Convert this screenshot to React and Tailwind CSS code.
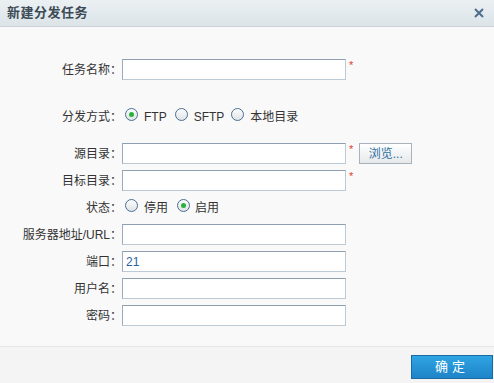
import React from 'react';

const font = { fontFamily: '"Liberation Sans", "Noto Sans CJK SC", sans-serif' };

function Radio({ checked }) {
    return (
        <span className="relative inline-block w-[13px] h-[13px] rounded-full border border-[#4a6f93] bg-gradient-to-b from-[#fdfdfd] to-[#dfe3e6] shrink-0">
            {checked && <span className="absolute left-[3px] top-[3px] w-[5px] h-[5px] rounded-full bg-[#2bb13a]" />}
        </span>
    );
}

function Field({ label, mt = 'mt-[6px]', children }) {
    return (
        <div className={`flex items-center h-[21px] ${mt}`}>
            <label className="w-[122px] text-right text-[12px] text-[#333] whitespace-nowrap">{label}</label>
            {children}
        </div>
    );
}

function TextInput({ value = '' }) {
    return (
        <input
            type="text"
            defaultValue={value}
            className="w-[224px] h-[21px] bg-white border border-t-[#8e9fb0] border-l-[#9aabbb] border-b-[#bccad6] border-r-[#bccad6] px-[3px] text-[12px] text-[#2b5fa0] outline-none"
            style={font}
        />
    );
}

function Req() {
    return <span className="ml-[3px] self-start mt-[1px] text-[11px] leading-none text-[#e43a3a]">*</span>;
}

export default function App() {
    return (
        <div className="w-[494px] h-[383px] flex flex-col bg-[#f9f9f9]" style={font}>
            {/* header */}
            <div className="h-[27px] flex items-center justify-between px-[7px] bg-gradient-to-b from-[#ebf0f3] to-[#dce4e8] border-b border-[#c9d3d8]">
                <span className="text-[13px] font-bold text-[#3c4a56] tracking-[0.5px]">新建分发任务</span>
                <svg width="10" height="10" viewBox="0 0 10 10" className="mr-[3px]">
                    <path d="M1 1L9 9M9 1L1 9" stroke="#4d6d8c" strokeWidth="2" />
                </svg>
            </div>

            {/* body */}
            <div className="flex-1 pt-[32px]">
                <Field label="任务名称：" mt="mt-0">
                    <TextInput />
                    <Req />
                </Field>

                <Field label="分发方式：" mt="mt-[26px]">
                    <div className="flex items-center text-[12px] text-[#333]">
                        <span className="ml-[3px]"><Radio checked /></span>
                        <span className="ml-[6px]">FTP</span>
                        <span className="ml-[8px]"><Radio /></span>
                        <span className="ml-[6px]">SFTP</span>
                        <span className="ml-[7px]"><Radio /></span>
                        <span className="ml-[6px]">本地目录</span>
                    </div>
                </Field>

                <Field label="源目录：" mt="mt-[16px]">
                    <TextInput />
                    <Req />
                    <button className="ml-[6px] w-[53px] h-[21px] border border-[#a7b2bc] bg-gradient-to-b from-[#ffffff] to-[#e6e8ea] text-[12px] text-[#2f6f9f]">浏览...</button>
                </Field>

                <Field label="目标目录：">
                    <TextInput />
                    <Req />
                </Field>

                <Field label="状态：">
                    <div className="flex items-center text-[12px] text-[#333]">
                        <span className="ml-[3px]"><Radio /></span>
                        <span className="ml-[6px]">停用</span>
                        <span className="ml-[9px]"><Radio checked /></span>
                        <span className="ml-[5px]">启用</span>
                    </div>
                </Field>

                <Field label="服务器地址/URL：">
                    <TextInput />
                </Field>
                <Field label="端口：">
                    <TextInput value="21" />
                </Field>
                <Field label="用户名：">
                    <TextInput />
                </Field>
                <Field label="密码：">
                    <TextInput />
                </Field>
            </div>

            {/* footer */}
            <div className="h-[37px] flex items-center justify-end border-t border-[#e6e6e6] bg-[#f4f4f4] pr-[1px]">
                <button className="w-[82px] h-[24px] mt-[4px] border border-[#1b6aa6] bg-gradient-to-b from-[#2fa4e3] to-[#1e84c8] text-white text-[13px] tracking-[4px]">确定</button>
            </div>
        </div>
    );
}
